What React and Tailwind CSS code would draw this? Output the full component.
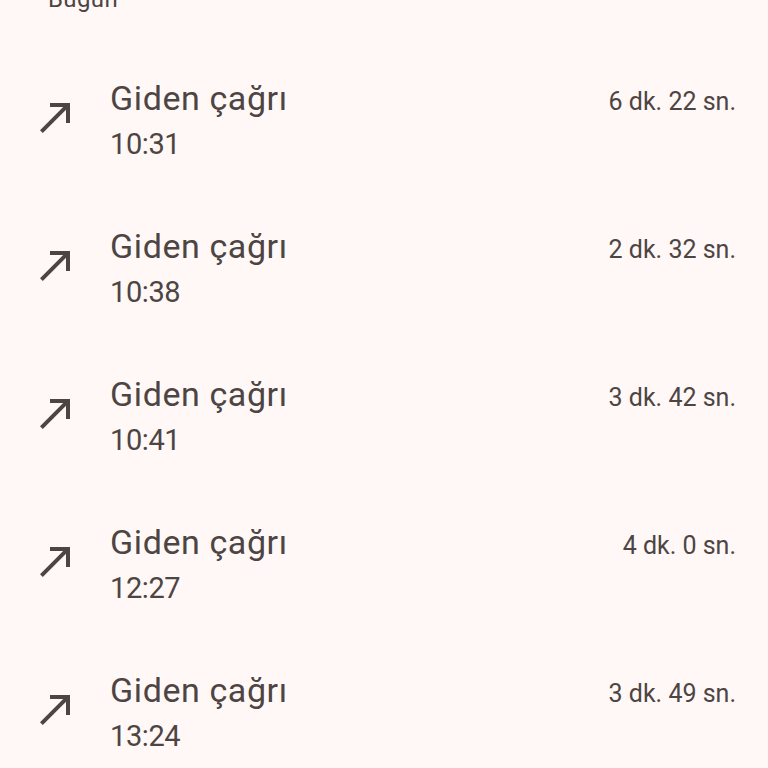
import React from "react";

const rows = [
  { time: "10:31", dur: "6 dk. 22 sn." },
  { time: "10:38", dur: "2 dk. 32 sn." },
  { time: "10:41", dur: "3 dk. 42 sn." },
  { time: "12:27", dur: "4 dk. 0 sn." },
  { time: "13:24", dur: "3 dk. 49 sn." },
];

function Arrow() {
  return (
    <svg width="48" height="48" viewBox="0 0 24 24" fill="#4d4543">
      <path d="M9 5v2h6.59L4 18.59 5.41 20 17 8.41V15h2V5z" />
    </svg>
  );
}

export default function App() {
  return (
    <div
      className="w-[768px] h-[768px] overflow-hidden bg-[#fff8f6] text-[#4d4543]"
      style={{ fontFamily: "Roboto, 'Noto Sans', sans-serif" }}
    >
      <div className="h-[62px] pl-[48px]">
        <div className="-mt-[15px] text-[24px] leading-[28px] tracking-[0.4px]">Bugün</div>
      </div>
      {rows.map((r, i) => (
        <div key={i} className="h-[148px] flex items-center pl-[32px] pr-[32px]">
          <div className="w-[48px] h-[48px] mt-[-8px]">
            <Arrow />
          </div>
          <div className="ml-[30px] flex-1 flex flex-col -mt-[4px]">
            <div className="text-[34px] leading-[44px] tracking-[0.6px]">Giden çağrı</div>
            <div className="text-[29px] leading-[36px] mt-[6px] tracking-[-0.4px]">{r.time}</div>
          </div>
          <div className="self-start mt-[40px] text-[25px] leading-[30px]">{r.dur}</div>
        </div>
      ))}
    </div>
  );
}
